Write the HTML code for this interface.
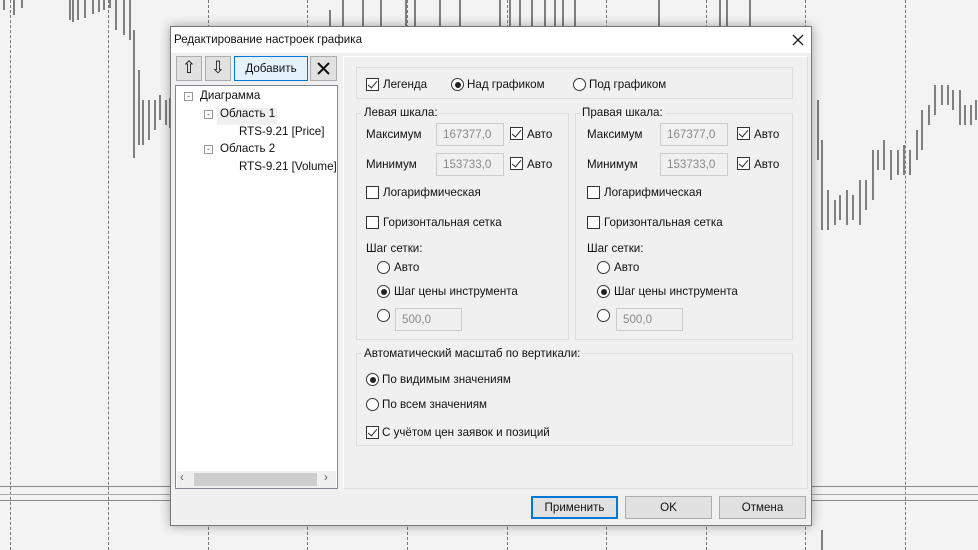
<!DOCTYPE html>
<html><head><meta charset="utf-8"><style>
*{box-sizing:border-box;margin:0;padding:0}
body{width:978px;height:550px;overflow:hidden;background:#f3f3f3;font-family:"Liberation Sans",sans-serif;font-size:11.6px;color:#111;position:relative}
.a{position:absolute;white-space:nowrap}
.dash{position:absolute;top:0;height:550px;border-left:1px dashed #777;width:0}
.hl{position:absolute;left:0;width:978px;height:1px;background:#888}
.dlg{position:absolute;left:170px;top:26px;width:642px;height:500px;background:#f0f0f0;border:1px solid #777;box-shadow:0 0 10px rgba(0,0,0,.35)}
.cb{position:absolute;width:13px;height:13px;border:1px solid #333;background:#fff}
.cb.c::after{content:"";position:absolute;left:3px;top:0px;width:4px;height:8px;border:solid #222;border-width:0 1.5px 1.5px 0;transform:rotate(40deg)}
.rb{position:absolute;width:13px;height:13px;border:1px solid #333;border-radius:50%;background:#fff}
.rb.c::after{content:"";position:absolute;left:2.5px;top:2.5px;width:6px;height:6px;border-radius:50%;background:#222}
.inp{position:absolute;height:23px;border:1px solid #ccc;background:#f0f0f0;color:#8a8a8a;padding:4px 6px}
.grp{position:absolute;border:1px solid #dcdcdc}
.btn{position:absolute;height:23px;border:1px solid #adadad;background:#e1e1e1;text-align:center;line-height:21px}
</style></head><body>
<div class="dash" style="left:10px"></div><div class="dash" style="left:108px"></div><div class="dash" style="left:208px"></div><div class="dash" style="left:307px"></div><div class="dash" style="left:407px"></div><div class="dash" style="left:507px"></div><div class="dash" style="left:606px"></div><div class="dash" style="left:706px"></div><div class="dash" style="left:805px"></div><div class="dash" style="left:905px"></div>
<div class="hl" style="top:486px"></div><div class="hl" style="top:494px;background:#aaa"></div><div class="hl" style="top:500px"></div>
<svg class="a" style="left:0;top:0" width="978" height="550"><g stroke="#333" stroke-width="1.2" fill="none">
<path d="M4 0v10M14 0v15M22 0v8M70 0v20M73 0v22M78 0v20M85 0v18M93 0v14M99 0v12M104 0v10M110 0v8M116 0v30M124 0v35M130 0v40M134 30v128M139 70v75M143 100v45M149 100v40M155 100v30M160 95v25M166 100v25M170 98v30M330 10v18M343 0v26M363 0v26M381 0v26M406 0v26M415 0v26M440 0v26M460 0v26M500 0v26M510 0v26M520 0v26M532 0v26M545 0v26M555 0v26M563 0v26M575 0v26M659 0v26M720 0v26M727 0v26M750 0v26M818 100v60M822 140v90M828 190v40M835 200v25M840 195v25M847 190v35M853 195v25M860 180v45M866 180v30M873 150v50M878 150v20M884 140v30M891 150v30M898 150v25M904 145v30M910 150v25M917 130v30M922 110v40M929 105v20M935 85v30M942 85v20M948 85v20M953 90v20M960 90v35M965 105v20M971 105v20M976 100v20M822 530v20"/>
</g></svg>
<div class="dlg">
<div class="a" style="left:0;top:0;width:640px;height:26px;background:#fff"></div>
<div class="a" style="left:3px;top:6px">Редактирование настроек графика</div>
<svg class="a" style="left:621px;top:7px" width="12" height="12"><path d="M1 1L11 11M11 1L1 11" stroke="#222" stroke-width="1.3"/></svg>
<div class="btn" style="left:5px;top:29px;width:26px;height:25px;font-size:17px;line-height:22px">⇧</div>
<div class="btn" style="left:34px;top:29px;width:26px;height:25px;font-size:17px;line-height:22px">⇩</div>
<div class="btn" style="left:63px;top:29px;width:74px;height:25px;background:#e5f1fb;border-color:#0078d7;line-height:23px">Добавить</div>
<div class="btn" style="left:139px;top:29px;width:27px;height:25px"><svg style="margin-top:5px" width="13" height="13"><path d="M1 1L12 12M12 1L1 12" stroke="#111" stroke-width="2"/></svg></div>
<div class="a" style="left:4px;top:58px;width:163px;height:404px;background:#fff;border:1px solid #828790"></div>
<div class="a" style="left:13px;top:65px;width:9px;height:9px;border:1px solid #999;font-size:9px;line-height:6px;text-align:center;color:#555">-</div>
<div class="a" style="left:29px;top:62px">Диаграмма</div>
<div class="a" style="left:46px;top:81px;width:60px;height:17px;background:#f0f0f0"></div>
<div class="a" style="left:33px;top:83px;width:9px;height:9px;border:1px solid #999;font-size:9px;line-height:6px;text-align:center;color:#555">-</div>
<div class="a" style="left:49px;top:80px">Область 1</div>
<div class="a" style="left:68px;top:98px">RTS-9.21 [Price]</div>
<div class="a" style="left:33px;top:118px;width:9px;height:9px;border:1px solid #999;font-size:9px;line-height:6px;text-align:center;color:#555">-</div>
<div class="a" style="left:49px;top:115px">Область 2</div>
<div class="a" style="left:68px;top:133px">RTS-9.21 [Volume]</div>
<div class="a" style="left:6px;top:444px;width:159px;height:17px;background:#f0f0f0"></div>
<div class="a" style="left:23px;top:446px;width:123px;height:13px;background:#cdcdcd"></div>
<div class="a" style="left:9px;top:444px;color:#555">‹</div><div class="a" style="left:153px;top:444px;color:#555">›</div>
<div class="a" style="left:172px;top:29px;width:465px;height:433px;border:1px solid #fff;border-right-color:#ddd;border-bottom-color:#ddd"></div>
<div class="grp" style="left:185px;top:40px;width:437px;height:32px"></div>
<div class="cb c" style="left:195px;top:51px"></div><div class="a" style="left:212px;top:51px">Легенда</div>
<div class="rb c" style="left:280px;top:51px"></div><div class="a" style="left:296px;top:51px">Над графиком</div>
<div class="rb" style="left:402px;top:51px"></div><div class="a" style="left:418px;top:51px">Под графиком</div>
<div class="grp" style="left:185px;top:86px;width:213px;height:227px"></div>
<div class="a" style="left:191px;top:79px;background:#f0f0f0;padding:0 2px">Левая шкала:</div>
<div class="grp" style="left:404px;top:86px;width:218px;height:227px"></div>
<div class="a" style="left:409px;top:79px;background:#f0f0f0;padding:0 2px">Правая шкала:</div>
<div class="a" style="left:195px;top:101px">Максимум</div><div class="inp" style="left:265px;top:96px;width:68px">167377,0</div>
<div class="cb c" style="left:339px;top:100px"></div><div class="a" style="left:356px;top:101px">Авто</div>
<div class="a" style="left:195px;top:131px">Минимум</div><div class="inp" style="left:265px;top:126px;width:68px">153733,0</div>
<div class="cb c" style="left:339px;top:130px"></div><div class="a" style="left:356px;top:131px">Авто</div>
<div class="cb" style="left:195px;top:159px"></div><div class="a" style="left:212px;top:159px">Логарифмическая</div>
<div class="cb" style="left:195px;top:189px"></div><div class="a" style="left:212px;top:189px">Горизонтальная сетка</div>
<div class="a" style="left:195px;top:215px">Шаг сетки:</div>
<div class="rb" style="left:206px;top:234px"></div><div class="a" style="left:223px;top:234px">Авто</div>
<div class="rb c" style="left:206px;top:258px"></div><div class="a" style="left:223px;top:258px">Шаг цены инструмента</div>
<div class="rb" style="left:206px;top:282px"></div><div class="inp" style="left:224px;top:281px;width:67px">500,0</div>
<div class="a" style="left:416px;top:101px">Максимум</div><div class="inp" style="left:489px;top:96px;width:68px">167377,0</div>
<div class="cb c" style="left:566px;top:100px"></div><div class="a" style="left:583px;top:101px">Авто</div>
<div class="a" style="left:416px;top:131px">Минимум</div><div class="inp" style="left:489px;top:126px;width:68px">153733,0</div>
<div class="cb c" style="left:566px;top:130px"></div><div class="a" style="left:583px;top:131px">Авто</div>
<div class="cb" style="left:416px;top:159px"></div><div class="a" style="left:433px;top:159px">Логарифмическая</div>
<div class="cb" style="left:416px;top:189px"></div><div class="a" style="left:433px;top:189px">Горизонтальная сетка</div>
<div class="a" style="left:416px;top:215px">Шаг сетки:</div>
<div class="rb" style="left:426px;top:234px"></div><div class="a" style="left:443px;top:234px">Авто</div>
<div class="rb c" style="left:426px;top:258px"></div><div class="a" style="left:443px;top:258px">Шаг цены инструмента</div>
<div class="rb" style="left:426px;top:282px"></div><div class="inp" style="left:445px;top:281px;width:67px">500,0</div>
<div class="grp" style="left:185px;top:326px;width:437px;height:93px"></div>
<div class="a" style="left:191px;top:320px;background:#f0f0f0;padding:0 2px">Автоматический масштаб по вертикали:</div>
<div class="rb c" style="left:195px;top:346px"></div><div class="a" style="left:211px;top:346px">По видимым значениям</div>
<div class="rb" style="left:195px;top:371px"></div><div class="a" style="left:211px;top:371px">По всем значениям</div>
<div class="cb c" style="left:195px;top:399px"></div><div class="a" style="left:211px;top:399px">С учётом цен заявок и позиций</div>
<div class="btn" style="left:360px;top:469px;width:87px;border:2px solid #0078d7;line-height:19px">Применить</div>
<div class="btn" style="left:454px;top:469px;width:87px">OK</div>
<div class="btn" style="left:548px;top:469px;width:87px">Отмена</div>
</div>
</body></html>
